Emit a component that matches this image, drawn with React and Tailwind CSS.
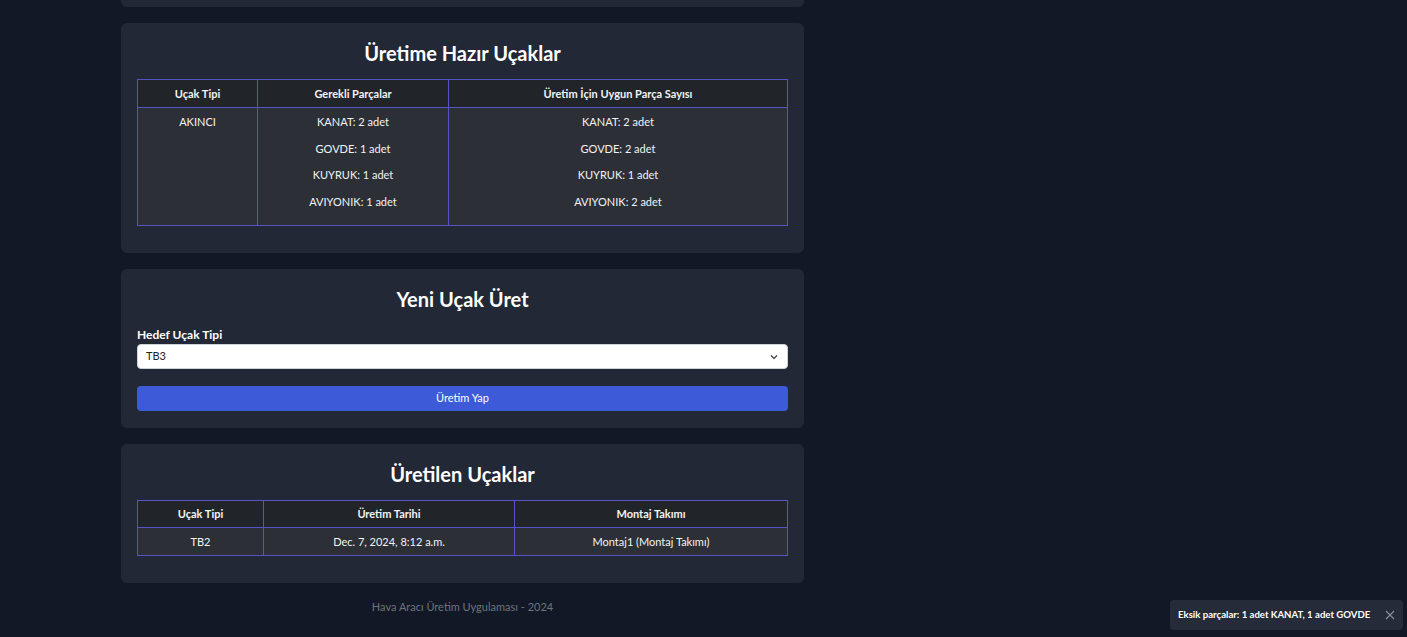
import React, { useState } from "react";

const ready = [
  {
    type: "AKINCI",
    required: ["KANAT: 2 adet", "GOVDE: 1 adet", "KUYRUK: 1 adet", "AVIYONIK: 1 adet"],
    available: ["KANAT: 2 adet", "GOVDE: 2 adet", "KUYRUK: 1 adet", "AVIYONIK: 2 adet"],
  },
];

const produced = [{ type: "TB2", date: "Dec. 7, 2024, 8:12 a.m.", team: "Montaj1 (Montaj Takımı)" }];

// cell borders, padding set per table
const th = "border border-[#5653c4] px-2 font-bold text-center";
const td = "border border-[#5653c4] px-2 text-center align-top";

function Card({ title, children, className = "", titleGap = "mb-3" }) {
  return (
    <div className={"bg-[#222836] rounded-md px-4 pt-4 " + className}>
      <h2 className={"text-[20px] leading-7 font-bold text-center text-white " + titleGap}>{title}</h2>
      {children}
    </div>
  );
}

export default function App() {
  const [target, setTarget] = useState("TB3");
  const [toast, setToast] = useState(true);

  return (
    <div
      className="min-h-screen bg-[#121826] text-[#f1f3f5] relative"
      style={{ fontFamily: "Lato, 'Noto Sans', sans-serif" }}
    >
      <div className="w-[683px] ml-[121px] flex flex-col gap-4">
        <div className="h-[24px] -mt-[17px] bg-[#222836] rounded-md" />

        <Card title="Üretime Hazır Uçaklar" className="pb-[27px]">
          <table className="w-full border-collapse text-[11px] leading-4">
            <thead className="bg-[#212529]">
              <tr>
                <th className={th + " w-[120px] pt-[6px] pb-[5px]"}>Uçak Tipi</th>
                <th className={th + " w-[191px] pt-[6px] pb-[5px]"}>Gerekli Parçalar</th>
                <th className={th + " pt-[6px] pb-[5px]"}>Üretim İçin Uygun Parça Sayısı</th>
              </tr>
            </thead>
            <tbody className="bg-[#2c3036]">
              {ready.map((r) => (
                <tr key={r.type}>
                  <td className={td + " pt-[6px]"}>{r.type}</td>
                  <td className={td + " pt-[6px] pb-[15px]"}>
                    <div className="flex flex-col gap-[10.7px]">
                      {r.required.map((p) => (
                        <span key={p}>{p}</span>
                      ))}
                    </div>
                  </td>
                  <td className={td + " pt-[6px] pb-[15px]"}>
                    <div className="flex flex-col gap-[10.7px]">
                      {r.available.map((p) => (
                        <span key={p}>{p}</span>
                      ))}
                    </div>
                  </td>
                </tr>
              ))}
            </tbody>
          </table>
        </Card>

        <Card title="Yeni Uçak Üret" className="pb-[17px]" titleGap="mb-[14px]">
          <label className="block text-[12px] leading-4 font-bold text-white mb-[1px]">Hedef Uçak Tipi</label>
          <div className="relative">
            <select
              value={target}
              onChange={(e) => setTarget(e.target.value)}
              className="block appearance-none w-full h-[25px] bg-white text-[#212529] text-[11px] rounded-[4px] border border-[#ced4da] px-2"
            >
              <option>TB2</option>
              <option>TB3</option>
              <option>AKINCI</option>
              <option>KIZILELMA</option>
            </select>
            <svg
              className="absolute right-[10px] top-[10px] pointer-events-none"
              width="8"
              height="6"
              viewBox="0 0 8 6"
              fill="none"
              stroke="#343a40"
              strokeWidth="1.2"
            >
              <path d="M1 1.5l3 3 3-3" />
            </svg>
          </div>
          <button className="block mt-[17px] w-full h-[25px] bg-[#3d5bd6] rounded-[4px] text-white text-[11px]">
            Üretim Yap
          </button>
        </Card>

        <Card title="Üretilen Uçaklar" className="pb-[27px]">
          <table className="w-full border-collapse text-[11px] leading-4">
            <thead className="bg-[#212529]">
              <tr>
                <th className={th + " w-[126px] py-[5px]"}>Uçak Tipi</th>
                <th className={th + " w-[251px] py-[5px]"}>Üretim Tarihi</th>
                <th className={th + " py-[5px]"}>Montaj Takımı</th>
              </tr>
            </thead>
            <tbody className="bg-[#2c3036]">
              {produced.map((p) => (
                <tr key={p.type}>
                  <td className={td + " pt-[6px] pb-[5px]"}>{p.type}</td>
                  <td className={td + " pt-[6px] pb-[5px]"}>{p.date}</td>
                  <td className={td + " pt-[6px] pb-[5px]"}>{p.team}</td>
                </tr>
              ))}
            </tbody>
          </table>
        </Card>

        <p className="text-center text-[11px] leading-4 text-[#6c757d]">Hava Aracı Üretim Uygulaması - 2024</p>
      </div>

      {toast && (
        <div className="absolute left-[1170px] top-[600px] w-[233px] h-[30px] bg-[#252b38] rounded-[4px] flex items-center pl-2 pr-2">
          <span className="text-[9.6px] font-bold text-white flex-1 whitespace-nowrap">
            Eksik parçalar: 1 adet KANAT, 1 adet GOVDE
          </span>
          <button onClick={() => setToast(false)} className="text-[#8a9099]">
            <svg width="10" height="10" viewBox="0 0 10 10" stroke="currentColor" strokeWidth="1.1">
              <path d="M1 1l8 8M9 1l-8 8" />
            </svg>
          </button>
        </div>
      )}
    </div>
  );
}
